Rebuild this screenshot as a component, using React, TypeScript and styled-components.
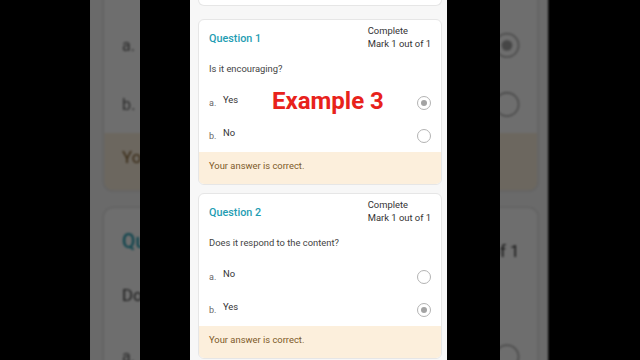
import React from 'react';
import styled, { createGlobalStyle } from 'styled-components';

const Global = createGlobalStyle`
  html, body { margin: 0; padding: 0; background: #000; }
  body { font-family: Roboto, "Noto Sans", "Liberation Sans", Arial, sans-serif; }
  * { box-sizing: border-box; }
`;

const Stage = styled.div`
  position: relative;
  width: 640px;
  height: 360px;
  overflow: hidden;
  background: #000;
`;

const BgLayer = styled.div`
  position: absolute;
  top: 0;
  left: 190px;
  width: 257px;
  height: 360px;
  background: #f7f7f7;
  transform-origin: 129px 176px;
  transform: scale(1.79);
  filter: brightness(0.43) blur(0.5px);
`;

const Frame = styled.div`
  position: relative;
  display: flex;
  height: 360px;
`;

const Bar = styled.div<{ $w: number }>`
  flex: none;
  width: ${(p) => p.$w}px;
  background: #000;
`;

const Window = styled.div`
  flex: none;
  width: 50px;
`;

const Phone = styled.div`
  position: relative;
  flex: none;
  width: 257px;
  height: 360px;
  overflow: hidden;
  background: #f7f7f7;
`;

const Column = styled.div`
  display: flex;
  flex-direction: column;
  gap: 8px;
  padding: 0 5px 0 8px;
`;

const StubCard = styled.div`
  flex: none;
  height: 6px;
  margin-bottom: 5px;
  background: #fff;
  border: 1px solid #e6e6e6;
  border-top: none;
  border-radius: 0 0 6px 6px;
`;

const Card = styled.div`
  flex: none;
  background: #fff;
  border: 1px solid #e6e6e6;
  border-radius: 6px;
  overflow: hidden;
`;

const CardBody = styled.div`
  padding: 3px 10px 0 10px;
`;

const Header = styled.div`
  display: flex;
  justify-content: space-between;
  align-items: center;
  height: 27px;
`;

const QTitle = styled.div`
  margin-top: 3px;
  color: #1f9db3;
  font-size: 10.8px;
  font-weight: 500;
`;

const Status = styled.div`
  color: #333;
  font-size: 9.4px;
  line-height: 13px;
`;

const Prompt = styled.div`
  margin-top: 12px;
  height: 14px;
  line-height: 14px;
  color: #444;
  font-size: 9.4px;
`;

const Options = styled.div`
  margin-top: 10px;
  display: flex;
  flex-direction: column;
`;

const OptionRow = styled.div`
  display: flex;
  align-items: center;
  height: 33px;
`;

const OptLabel = styled.span`
  width: 14px;
  color: #666;
  font-size: 9px;
`;

const OptText = styled.span`
  color: #333;
  font-size: 9.4px;
  margin-bottom: 6px;
`;

const Radio = styled.span<{ $checked?: boolean }>`
  margin-left: auto;
  width: 14px;
  height: 14px;
  border-radius: 50%;
  border: 1.5px solid #b3b3b3;
  display: flex;
  align-items: center;
  justify-content: center;
  &::after {
    content: '';
    width: 6px;
    height: 6px;
    border-radius: 50%;
    background: #a3a3a3;
    display: ${(p) => (p.$checked ? 'block' : 'none')};
  }
`;

const Feedback = styled.div`
  height: 32px;
  padding: 7px 10px 0;
  line-height: 14px;
  background: #fcefdc;
  color: #7d5a29;
  font-size: 9.4px;
`;

const Caption = styled.div`
  position: absolute;
  left: 82px;
  top: 89px;
  font-size: 24px;
  line-height: 24px;
  font-weight: 700;
  color: #e8221b;
  white-space: nowrap;
`;

type Opt = { label: string; text: string; checked?: boolean };
type Q = { title: string; prompt: string; options: Opt[] };

const questions: Q[] = [
  {
    title: 'Question 1',
    prompt: 'Is it encouraging?',
    options: [
      { label: 'a.', text: 'Yes', checked: true },
      { label: 'b.', text: 'No' },
    ],
  },
  {
    title: 'Question 2',
    prompt: 'Does it respond to the content?',
    options: [
      { label: 'a.', text: 'No' },
      { label: 'b.', text: 'Yes', checked: true },
    ],
  },
];

const Screen = () => (
  <Column>
    <StubCard />
    {questions.map((q) => (
      <Card key={q.title}>
        <CardBody>
          <Header>
            <QTitle>{q.title}</QTitle>
            <Status>
              Complete
              <br />
              Mark 1 out of 1
            </Status>
          </Header>
          <Prompt>{q.prompt}</Prompt>
          <Options>
            {q.options.map((o) => (
              <OptionRow key={o.label}>
                <OptLabel>{o.label}</OptLabel>
                <OptText>{o.text}</OptText>
                <Radio $checked={o.checked} />
              </OptionRow>
            ))}
          </Options>
        </CardBody>
        <Feedback>Your answer is correct.</Feedback>
      </Card>
    ))}
  </Column>
);

export default function App() {
  return (
    <>
      <Global />
      <Stage>
        <BgLayer aria-hidden>
          <Screen />
        </BgLayer>
        <Frame>
          <Bar $w={90} />
          <Window />
          <Bar $w={50} />
          <Phone>
            <Screen />
            <Caption>Example 3</Caption>
          </Phone>
          <Bar $w={53} />
          <Window />
          <Bar $w={90} />
        </Frame>
      </Stage>
    </>
  );
}
